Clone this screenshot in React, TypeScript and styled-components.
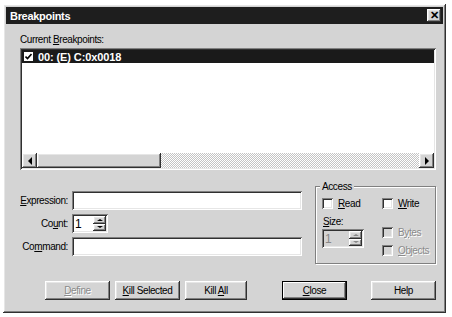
import React from 'react';
import styled, { createGlobalStyle, css } from 'styled-components';

const GlobalStyle = createGlobalStyle`
  html, body {
    margin: 0;
    padding: 0;
    background: #ffffff;
  }
  body {
    font-family: "Liberation Sans", Arial, sans-serif;
    font-size: 10px;
    letter-spacing: -0.4px;
    color: #000;
  }
`;

const raised = css`
  box-shadow: inset -1px -1px #303030, inset 1px 1px #ffffff,
    inset -2px -2px #808080, inset 2px 2px #e6e6e6;
`;

const sunken = css`
  box-shadow: inset 1px 1px #808080, inset -1px -1px #ffffff,
    inset 2px 2px #303030, inset -2px -2px #e6e6e6;
`;

const Page = styled.div`
  padding: 4px 6px 4px 3px;
`;

const Window = styled.div`
  ${raised};
  width: 443px;
  height: 309px;
  box-sizing: border-box;
  padding: 3px;
  background: #d4d4d4;
  display: flex;
  flex-direction: column;
`;

const TitleBar = styled.div`
  height: 17px;
  background: #1e1e1e;
  color: #fff;
  font-weight: bold;
  font-size: 11px;
  letter-spacing: -0.3px;
  display: flex;
  align-items: center;
  justify-content: space-between;
  padding: 0 2px 0 4px;
`;

const CloseBox = styled.div`
  ${raised};
  width: 14px;
  height: 13px;
  background: #d4d4d4;
  color: #000;
  font-size: 11px;
  font-weight: bold;
  display: flex;
  align-items: center;
  justify-content: center;
  line-height: 1;
`;

const Body = styled.div`
  padding: 9px 7px 0 14px;
  display: flex;
  flex-direction: column;
`;

const Label = styled.div`
  height: 13px;
  line-height: 13px;
`;

const ListBox = styled.div`
  ${sunken};
  margin-top: 2px;
  height: 122px;
  background: #fff;
  padding: 2px;
  box-sizing: border-box;
  display: flex;
  flex-direction: column;
`;

const ListArea = styled.div`
  flex: 1;
`;

const ListRow = styled.div<{ $selected?: boolean }>`
  height: 13px;
  display: flex;
  align-items: center;
  gap: 5px;
  padding-left: 2px;
  font-weight: bold;
  font-size: 11px;
  letter-spacing: -0.1px;
  background: ${(p) => (p.$selected ? '#1a1a1a' : 'transparent')};
  color: ${(p) => (p.$selected ? '#fff' : '#000')};
`;

const ListCheck = styled.span`
  width: 9px;
  height: 9px;
  background: #fff;
  display: flex;
  align-items: center;
  justify-content: center;
`;

const HScroll = styled.div`
  height: 15px;
  display: flex;
  background: repeating-conic-gradient(#ffffff 0 25%, #c4c4c4 0 50%) 0 0 / 2px 2px;
`;

const ScrollButton = styled.div`
  ${raised};
  width: 15px;
  height: 15px;
  background: #d4d4d4;
  display: flex;
  align-items: center;
  justify-content: center;
`;

const Thumb = styled.div`
  ${raised};
  width: 124px;
  background: #d4d4d4;
`;

const Track = styled.div`
  flex: 1;
`;

const Arrow = styled.span<{ $dir: 'left' | 'right' | 'up' | 'down'; $disabled?: boolean }>`
  width: 0;
  height: 0;
  ${(p) =>
    p.$dir === 'left'
      ? `border-top: 4px solid transparent; border-bottom: 4px solid transparent; border-right: 4px solid #000;`
      : p.$dir === 'right'
      ? `border-top: 4px solid transparent; border-bottom: 4px solid transparent; border-left: 4px solid #000;`
      : p.$dir === 'up'
      ? `border-left: 3px solid transparent; border-right: 3px solid transparent; border-bottom: 2px solid ${p.$disabled ? '#888' : '#000'};`
      : `border-left: 3px solid transparent; border-right: 3px solid transparent; border-top: 2px solid ${p.$disabled ? '#888' : '#000'};`}
`;

const FormArea = styled.div`
  display: flex;
  margin-top: 16px;
  gap: 13px;
`;

const Fields = styled.div`
  display: flex;
  flex-direction: column;
  gap: 4px;
  padding-top: 5px;
`;

const FieldRow = styled.div`
  display: flex;
  align-items: center;
  gap: 4px;
`;

const FieldLabel = styled.div`
  width: 48px;
  text-align: right;
`;

const TextInput = styled.div<{ $width: number; $disabled?: boolean }>`
  ${sunken};
  width: ${(p) => p.$width}px;
  height: 19px;
  box-sizing: border-box;
  background: ${(p) => (p.$disabled ? '#d4d4d4' : '#fff')};
  color: ${(p) => (p.$disabled ? '#888' : '#000')};
  font-size: 12px;
  padding: 2px 3px;
  display: flex;
  align-items: center;
  position: relative;
`;

const Spinner = styled.div`
  position: absolute;
  right: 2px;
  top: 2px;
  bottom: 2px;
  width: 13px;
  display: flex;
  flex-direction: column;
`;

const SpinButton = styled.div`
  ${raised};
  flex: 1;
  background: #d4d4d4;
  display: flex;
  align-items: center;
  justify-content: center;
`;

const GroupBox = styled.div`
  position: relative;
  width: 121px;
  height: 78px;
  box-sizing: border-box;
  border: 1px solid #808080;
  box-shadow: 1px 1px #fff, inset 1px 1px #fff;
  padding: 10px 5px 0 6px;
  display: flex;
`;

const Legend = styled.span`
  position: absolute;
  top: -6px;
  left: 4px;
  padding: 0 2px;
  background: #d4d4d4;
  line-height: 11px;
`;

const GroupCol = styled.div<{ $width?: number }>`
  display: flex;
  flex-direction: column;
  width: ${(p) => (p.$width ? `${p.$width}px` : 'auto')};
`;

const Check = styled.label<{ $disabled?: boolean; $top?: number }>`
  display: flex;
  align-items: center;
  gap: 5px;
  height: 12px;
  margin-top: ${(p) => p.$top ?? 0}px;
  color: ${(p) => (p.$disabled ? '#8a8a8a' : '#000')};
  text-shadow: ${(p) => (p.$disabled ? '1px 1px #fff' : 'none')};
`;

const Box = styled.span<{ $disabled?: boolean }>`
  ${sunken};
  width: 11px;
  height: 11px;
  background: ${(p) => (p.$disabled ? '#d4d4d4' : '#fff')};
`;

const SizeLabel = styled(Label)`
  margin-top: 6px;
  margin-left: 1px;
  margin-bottom: 1px;
`;

const ButtonBar = styled.div`
  display: flex;
  margin-top: 17px;
  padding-left: 25px;
`;

const Button = styled.div<{ $width: number; $disabled?: boolean; $default?: boolean; $gap?: number }>`
  ${(p) =>
    p.$default
      ? css`
          box-shadow: inset 0 0 0 1px #000, inset -2px -2px #303030, inset 2px 2px #ffffff,
            inset -3px -3px #808080;
        `
      : raised};
  width: ${(p) => p.$width}px;
  margin-left: ${(p) => p.$gap ?? 0}px;
  height: 19px;
  background: #d4d4d4;
  display: flex;
  align-items: center;
  justify-content: center;
  color: ${(p) => (p.$disabled ? '#8a8a8a' : '#000')};
  text-shadow: ${(p) => (p.$disabled ? '1px 1px #fff' : 'none')};
`;

export default function App() {
  return (
    <Page>
      <GlobalStyle />
      <Window>
        <TitleBar>
          <span>Breakpoints</span>
          <CloseBox>✕</CloseBox>
        </TitleBar>
        <Body>
          <Label>
            Current <u>B</u>reakpoints:
          </Label>
          <ListBox>
            <ListArea>
              <ListRow $selected>
                <ListCheck>
                  <svg width="7" height="7" viewBox="0 0 7 7">
                    <path d="M0.5 3.5 L2.5 5.5 L6.5 1" stroke="#000" strokeWidth="1.6" fill="none" />
                  </svg>
                </ListCheck>
                00: (E) C:0x0018
              </ListRow>
            </ListArea>
            <HScroll>
              <ScrollButton>
                <Arrow $dir="left" />
              </ScrollButton>
              <Thumb />
              <Track />
              <ScrollButton>
                <Arrow $dir="right" />
              </ScrollButton>
            </HScroll>
          </ListBox>
          <FormArea>
            <Fields>
              <FieldRow>
                <FieldLabel>
                  <u>E</u>xpression:
                </FieldLabel>
                <TextInput $width={230} />
              </FieldRow>
              <FieldRow>
                <FieldLabel>
                  Co<u>u</u>nt:
                </FieldLabel>
                <TextInput $width={36}>
                  1
                  <Spinner>
                    <SpinButton>
                      <Arrow $dir="up" />
                    </SpinButton>
                    <SpinButton>
                      <Arrow $dir="down" />
                    </SpinButton>
                  </Spinner>
                </TextInput>
              </FieldRow>
              <FieldRow>
                <FieldLabel>
                  Co<u>m</u>mand:
                </FieldLabel>
                <TextInput $width={230} />
              </FieldRow>
            </Fields>
            <GroupBox>
              <Legend>Access</Legend>
              <GroupCol $width={60}>
                <Check>
                  <Box />
                  <span>
                    <u>R</u>ead
                  </span>
                </Check>
                <SizeLabel>
                  <u>S</u>ize:
                </SizeLabel>
                <TextInput $width={42} $disabled>
                  1
                  <Spinner>
                    <SpinButton>
                      <Arrow $dir="up" $disabled />
                    </SpinButton>
                    <SpinButton>
                      <Arrow $dir="down" $disabled />
                    </SpinButton>
                  </Spinner>
                </TextInput>
              </GroupCol>
              <GroupCol>
                <Check>
                  <Box />
                  <span>
                    <u>W</u>rite
                  </span>
                </Check>
                <Check $disabled $top={17}>
                  <Box $disabled />
                  <span>
                    B<u>y</u>tes
                  </span>
                </Check>
                <Check $disabled $top={6}>
                  <Box $disabled />
                  <span>
                    <u>O</u>bjects
                  </span>
                </Check>
              </GroupCol>
            </GroupBox>
          </FormArea>
          <ButtonBar>
            <Button $width={65} $disabled>
              <span>
                <u>D</u>efine
              </span>
            </Button>
            <Button $width={65} $gap={5}>
              <span>
                <u>K</u>ill Selected
              </span>
            </Button>
            <Button $width={62} $gap={5}>
              <span>
                Kill <u>A</u>ll
              </span>
            </Button>
            <Button $width={65} $gap={35} $default>
              <span>
                <u>C</u>lose
              </span>
            </Button>
            <Button $width={65} $gap={24}>
              Help
            </Button>
          </ButtonBar>
        </Body>
      </Window>
    </Page>
  );
}
